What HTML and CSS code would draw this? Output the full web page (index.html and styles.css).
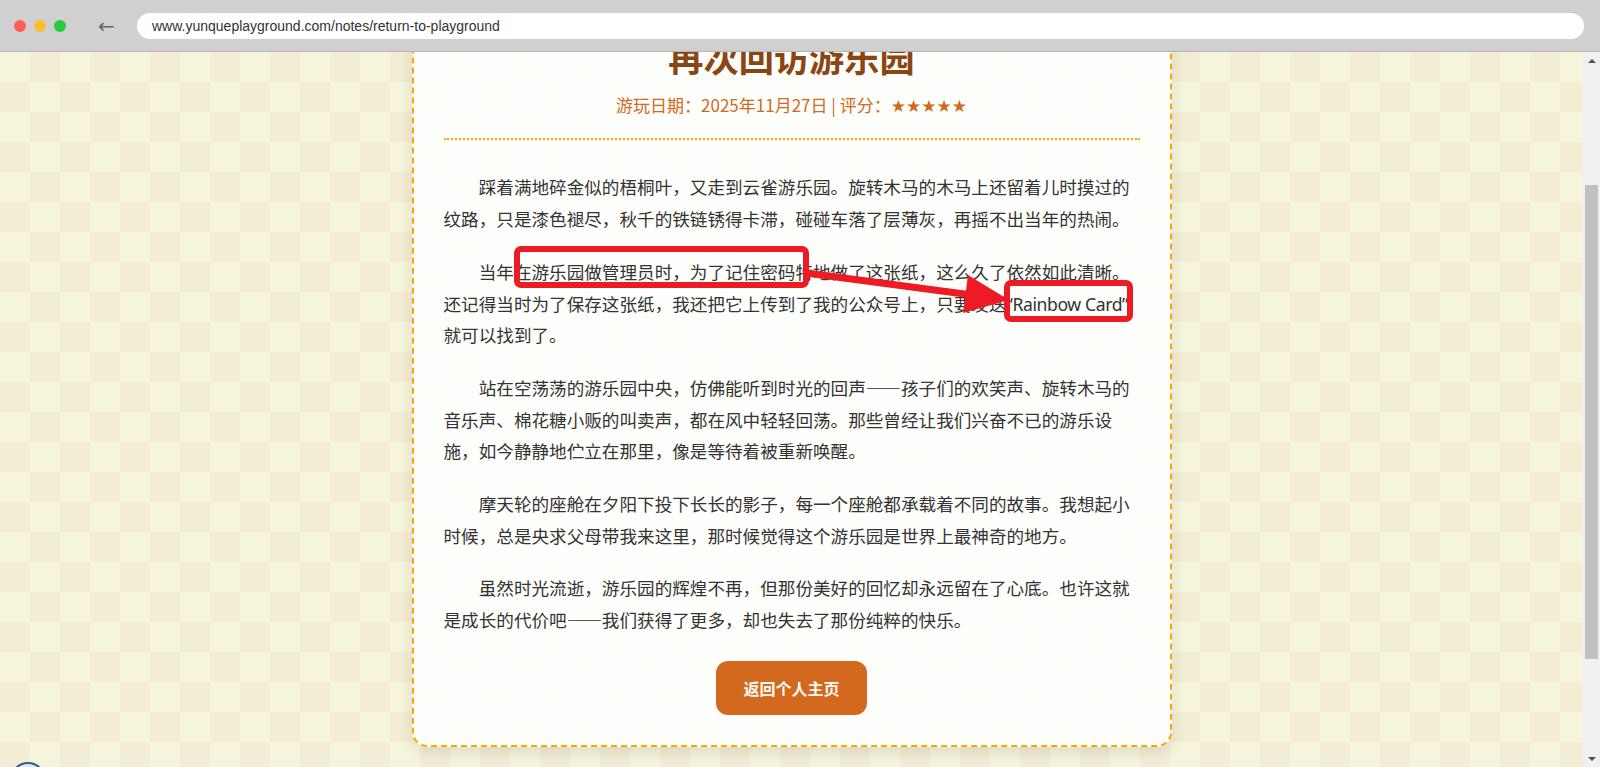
FILE: index.html
```html
<!DOCTYPE html>
<html lang="zh-CN">
<head>
    <meta charset="UTF-8">
    <meta name="viewport" content="width=device-width, initial-scale=1.0">
    <title>再次回访游乐园 - 云雀游乐园</title>
    <link rel="stylesheet" href="styles.css">
</head>
<body>

<!-- 浏览器顶栏 -->
<div class="browser-bar">
    <div class="dots">
        <span class="dot red"></span>
        <span class="dot yellow"></span>
        <span class="dot green"></span>
    </div>
    <span class="back">←</span>
    <div class="address">www.yunqueplayground.com/notes/return-to-playground</div>
</div>

<div class="window">
    <div class="viewport">
        <!-- 游记卡片 -->
        <div class="note">
            <div class="note-header">
                <h1>再次回访游乐园</h1>
                <p class="meta">游玩日期：2025年11月27日 | 评分：<span class="stars">★★★★★</span></p>
            </div>

            <div class="note-body">
                <p>踩着满地碎金似的梧桐叶，又走到云雀游乐园。旋转木马的木马上还留着儿时摸过的纹路，只是漆色褪尽，秋千的铁链锈得卡滞，碰碰车落了层薄灰，再摇不出当年的热闹。</p>
                <p>当年在游乐园做管理员时，为了记住密码特地做了这张纸，这么久了依然如此清晰。还记得当时为了保存这张纸，我还把它上传到了我的公众号上，只要发送<span class="keyword">“Rainbow Card”</span>就可以找到了。</p>
                <p>站在空荡荡的游乐园中央，仿佛能听到时光的回声——孩子们的欢笑声、旋转木马的音乐声、棉花糖小贩的叫卖声，都在风中轻轻回荡。那些曾经让我们兴奋不已的游乐设施，如今静静地伫立在那里，像是等待着被重新唤醒。</p>
                <p>摩天轮的座舱在夕阳下投下长长的影子，每一个座舱都承载着不同的故事。我想起小时候，总是央求父母带我来这里，那时候觉得这个游乐园是世界上最神奇的地方。</p>
                <p>虽然时光流逝，游乐园的辉煌不再，但那份美好的回忆却永远留在了心底。也许这就是成长的代价吧——我们获得了更多，却也失去了那份纯粹的快乐。</p>
            </div>

            <div class="actions">
                <a class="btn-home" href="#">返回个人主页</a>
            </div>
        </div>
    </div>

    <!-- 滚动条 -->
    <div class="scrollbar">
        <span class="arrow up"></span>
        <div class="track"><div class="thumb"></div></div>
        <span class="arrow down"></span>
    </div>
</div>

<div class="float-btn"></div>

<!-- 标注 -->
<svg class="annotation" width="1600" height="767" viewBox="0 0 1600 767">
    <rect x="517" y="249" width="289" height="36" rx="4" fill="none" stroke="#ed1c24" stroke-width="6"/>
    <rect x="1007" y="283" width="123" height="36" rx="4" fill="none" stroke="#ed1c24" stroke-width="6"/>
    <line x1="806" y1="273" x2="972" y2="295" stroke="#ed1c24" stroke-width="7"/>
    <polygon points="968,275 1009,300 963,313" fill="#ed1c24"/>
</svg>

</body>
</html>
```

FILE: styles.css
```css
body {
    margin: 0;
    padding: 0;
    height: 767px;
    overflow: hidden;
    font-family: "Noto Sans CJK SC", "Microsoft YaHei", sans-serif;
    color: #333;
}

/* 浏览器顶栏 */
.browser-bar {
    height: 51px;
    background-color: #d0d0d0;
    border-bottom: 1px solid #b4b4b4;
    display: flex;
    align-items: center;
    padding-left: 14px;
}

.dots {
    display: flex;
    gap: 8px;
}

.dot {
    width: 12px;
    height: 12px;
    border-radius: 50%;
}

.dot.red { background-color: #ff5f57; }
.dot.yellow { background-color: #febc2e; }
.dot.green { background-color: #28c840; }

.back {
    margin-left: 32px;
    width: 22px;
    font-family: "DejaVu Sans", sans-serif;
    font-size: 20px;
    color: #666;
    line-height: 1;
}

.address {
    flex: 1;
    margin-left: 17px;
    margin-right: 16px;
    height: 26px;
    line-height: 26px;
    background-color: white;
    border-radius: 13px;
    padding-left: 15px;
    font-family: "Liberation Sans", Arial, sans-serif;
    font-size: 14px;
    color: #333;
}

.window {
    display: flex;
    height: 715px;
}

.viewport {
    flex: 1;
    overflow: hidden;
    background-color: #f5f5dc;
    background-image: repeating-conic-gradient(#f3edd3 0 25%, #f5f5dc 0 50%);
    background-size: 60px 60px;
}

/* 游记卡片（页面已向下滚动） */
.note {
    box-sizing: border-box;
    width: 760px;
    margin: -52px auto 0;
    padding: 30px;
    background-color: rgba(255, 255, 255, 0.9);
    border: 2px dashed #ffa500;
    border-radius: 15px;
    box-shadow: 0 5px 15px rgba(0, 0, 0, 0.1);
}

.note-header {
    text-align: center;
    padding-bottom: 20px;
    border-bottom: 2px dotted #ffa500;
    margin-bottom: 31px;
}

.note-header h1 {
    margin: 0 0 10px;
    font-size: 35.2px;
    line-height: 1.4;
    color: #8b4513;
}

.meta {
    margin: 0;
    font-size: 17px;
    line-height: 1.6;
    color: #d2691e;
}

.stars {
    font-family: "DejaVu Sans", sans-serif;
    line-height: 1;
}

.note-body p {
    margin: 0 0 1.2em;
    font-size: 17.6px;
    line-height: 1.8;
    text-indent: 2em;
}

.keyword {
    font-family: "Noto Sans", sans-serif;
    letter-spacing: -0.4px;
    line-height: 1;
    white-space: nowrap;
}

.actions {
    margin-top: 25px;
    text-align: center;
}

.btn-home {
    display: inline-block;
    padding: 15px 27px;
    font-size: 16px;
    line-height: 24px;
    font-weight: bold;
    color: #fffaf0;
    background-color: #d2691e;
    border-radius: 12px;
    text-decoration: none;
}

/* 滚动条 */
.scrollbar {
    width: 17px;
    background-color: #f0f0f0;
    display: flex;
    flex-direction: column;
    align-items: center;
}

.arrow {
    width: 17px;
    height: 17px;
    display: flex;
    align-items: center;
    justify-content: center;
}

.arrow::after {
    content: "";
    border-left: 4px solid transparent;
    border-right: 4px solid transparent;
}

.arrow.up::after {
    border-bottom: 4px solid #505050;
}

.arrow.down::after {
    border-top: 4px solid #505050;
}

.track {
    flex: 1;
    width: 17px;
}

.thumb {
    margin: 116px 2px 0;
    height: 474px;
    background-color: #c1c1c1;
}

/* 左下角悬浮按钮 */
.float-btn {
    position: fixed;
    left: 10px;
    top: 762px;
    width: 32px;
    height: 32px;
    border-radius: 50%;
    border: 2px solid #2f5f8f;
    background: linear-gradient(#dfe8f1, #b9cbdc);
}

.annotation {
    position: absolute;
    top: 0;
    left: 0;
    pointer-events: none;
}
```
